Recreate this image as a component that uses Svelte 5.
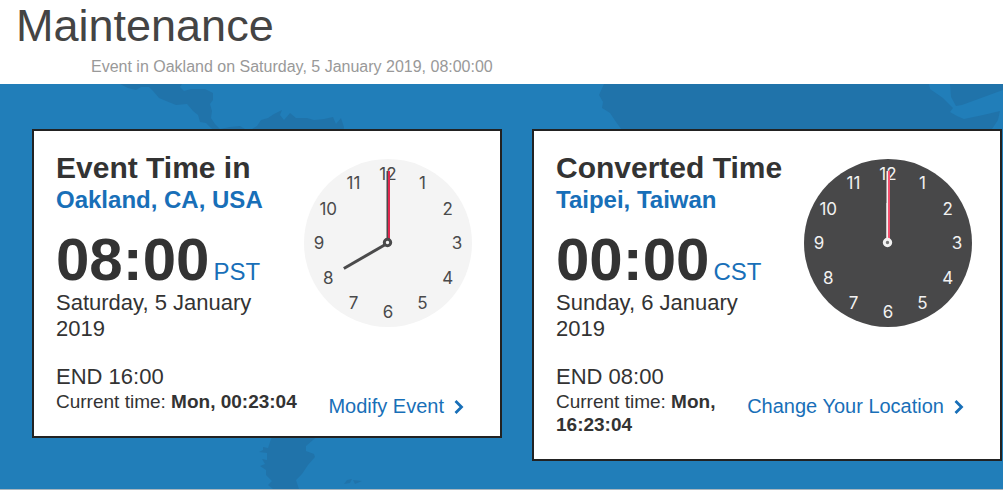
<script>
  const cards = [
    {
      heading: 'Event Time in',
      place: 'Oakland, CA, USA',
      time: '08:00',
      zone: 'PST',
      date: 'Saturday, 5 January 2019',
      end: '16:00',
      current: 'Mon, 00:23:04',
      action: 'Modify Event',
      hour: 8,
      face: '#f4f4f4',
      ink: '#4a4a4b',
      dot: '#f4f4f4',
      second: '#e0284f'
    },
    {
      heading: 'Converted Time',
      place: 'Taipei, Taiwan',
      time: '00:00',
      zone: 'CST',
      date: 'Sunday, 6 January 2019',
      end: '08:00',
      current: 'Mon, 16:23:04',
      action: 'Change Your Location',
      hour: 0,
      face: '#484849',
      ink: '#f2f2f2',
      dot: '#777777',
      second: '#f4506e'
    }
  ];

  const numerals = Array.from({ length: 12 }, (_, i) => {
    const angle = ((i + 1) * Math.PI) / 6;
    return {
      label: i + 1,
      x: 84 + 69 * Math.sin(angle),
      y: 90 - 69 * Math.cos(angle)
    };
  });
</script>

<header>
  <h1>Maintenance</h1>
  <p>Event in Oakland on Saturday, 5 January 2019, 08:00:00</p>
</header>

<main>
  <svg class="map" viewBox="0 0 1003 405" preserveAspectRatio="xMidYMin slice" aria-hidden="true">
    <g fill="#2073aa">
      <path d="M120 0 128 4 136 6 141 3 149 3 153 7 159 14 166 17 176 21 187 20 193 27 198 31 200 38 206 39 211 44 220 50H343L344 43 341 34 336 40 333 33 324 35 314 36 307 34 296 34 290 29 284 36 280 31 282 26 274 30 268 34 261 36 257 42 252 45 245 45 240 42 230 43 220 45 215 40 211 34 212 27 210 20 213 16 213 9 205 5 191 5 184 7 180 3 182 0Z" />
      <path d="M604 0 599 11 603 18 602 24 610 29 616 38 625 50H985L992 45 998 36 1000 27 983 31 964 35 957 32 950 28 953 24 943 14 930 5 929 0Z" />
      <path d="M950 0 951 13 956 22 962 21 1003 6V0Z" />
      <path d="M275 345 270 358 268 364 263 363 263 366 259 368 267 369 267 376 262 375 265 380 260 382 266 386 266 391 272 397 268 401 273 405H299L296 396 302 390 308 381 315 373 314 370 306 367 306 362 320 350Z" />
      <path d="M344 400 347 396 352 395 350 399Z" />
      <path d="M353 396 362 397 355 400Z" />
    </g>
  </svg>
  <div class="cards">
    {#each cards as c}
      <section class="card">
        <div class="top">
          <div class="details">
            <h2>{c.heading}</h2>
            <a class="place" href="#place">{c.place}</a>
            <p class="time"><strong>{c.time}</strong> <a href="#zone">{c.zone}</a></p>
            <p class="date">{c.date}</p>
          </div>
          <svg class="clock" viewBox="0 0 168 168" role="img" aria-label={c.time}>
            <circle cx="84" cy="84" r="84" fill={c.face} />
            <g fill={c.ink}>
              {#each numerals as n}
                <text x={n.x} y={n.y} text-anchor="middle">{n.label}</text>
              {/each}
            </g>
            <g stroke={c.ink}>
              <line x1="84" y1="84" x2="84" y2={c.hour ? 33 : 44} stroke-width="3" transform="rotate({c.hour * 30} 84 84)" />
              <line x1="83.5" y1="84" x2="83.5" y2="12" stroke-width="2" />
            </g>
            <line x1="85" y1="84" x2="85" y2="12" stroke={c.second} stroke-width="2" />
            <circle cx="83.5" cy="83.5" r="3.2" fill={c.dot} stroke={c.ink} stroke-width="3" />
          </svg>
        </div>
        <div class="bottom">
          <div class="status">
            <p class="end">END {c.end}</p>
            <p class="current">Current time: <b>{c.current}</b></p>
          </div>
          <a class="action" href="#action">
            {c.action}
            <svg viewBox="0 0 10 16" aria-hidden="true">
              <path d="M1.5 2 7.5 8 1.5 14" fill="none" stroke="currentColor" stroke-width="2.8" />
            </svg>
          </a>
        </div>
      </section>
    {/each}
  </div>
</main>

<style>
  :global(body) {
    margin: 0;
    background: #fff;
    color: #333;
    font-family: 'Liberation Sans', Arial, sans-serif;
  }
  h1, h2, p { margin: 0; }
  a { color: #186fb8; text-decoration: none; }
  header { padding: 0 16px 6px; }
  h1 {
    color: #444;
    font-size: 45px;
    line-height: 52px;
    font-weight: 400;
  }
  header p {
    padding: 4px 0 0 75px;
    color: #999;
    font-size: 16px;
    line-height: 22px;
  }
  main {
    position: relative;
    overflow: hidden;
    padding: 45px 1px 28px 32px;
    background: #217eb9;
    border-bottom: 1px solid #a9b6bf;
  }
  .map {
    position: absolute;
    inset: 0;
    width: 100%;
    height: 100%;
  }
  .cards {
    position: relative;
    display: grid;
    grid-template-columns: 1fr 1fr;
    gap: 30px;
    align-items: start;
  }
  .card {
    padding: 20px 28px 18px 22px;
    border: 2px solid #222;
    background: #fff;
  }
  .top { display: flex; gap: 16px; }
  .details { flex: 1; min-width: 0; }
  h2 {
    font-size: 30px;
    line-height: 34px;
    font-weight: 700;
    white-space: nowrap;
  }
  .place {
    display: block;
    font-size: 24px;
    line-height: 30px;
    font-weight: 700;
  }
  .time {
    display: flex;
    align-items: baseline;
    gap: 4px;
    padding-top: 15px;
    font-size: 24px;
    line-height: 24px;
  }
  .time strong { font-size: 60px; line-height: 60px; }
  .date, .end { font-size: 22px; line-height: 26px; }
  .clock {
    flex: none;
    width: 168px;
    height: 168px;
    margin-top: 8px;
  }
  .clock text { font: 400 17px Inter, sans-serif; }
  .bottom {
    display: flex;
    justify-content: space-between;
    gap: 16px;
    padding: 22px 8px 0 0;
  }
  .status { padding-bottom: 5px; }
  .current { font-size: 19px; line-height: 23px; }
  .action {
    display: flex;
    align-items: center;
    align-self: flex-start;
    gap: 10px;
    padding-top: 31px;
    font-size: 20px;
    line-height: 23px;
    white-space: nowrap;
  }
  .action svg { width: 10px; height: 16px; }
</style>
